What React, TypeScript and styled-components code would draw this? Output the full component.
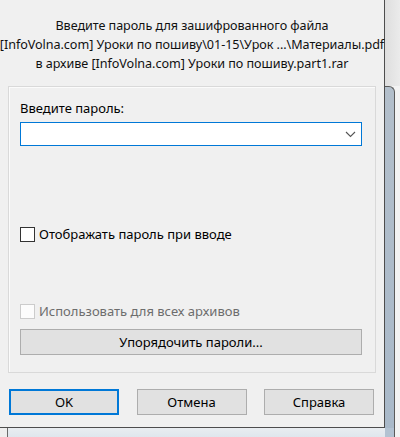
import React from 'react';
import styled, { createGlobalStyle } from 'styled-components';

const GlobalStyle = createGlobalStyle`
  html, body {
    margin: 0;
    padding: 0;
    background: #eef1f4;
  }
  * {
    box-sizing: border-box;
  }
`;

const Desktop = styled.div`
  width: 400px;
  height: 437px;
  display: grid;
  grid-template-columns: 385px 1fr;
  grid-template-rows: 428px 1fr;
  overflow: hidden;
  font-family: 'Noto Sans', 'Liberation Sans', sans-serif;
  font-size: 13px;
  color: #000;
`;

const Dialog = styled.div`
  background: #f0f0f0;
  border-right: 1px solid #4d4d4d;
  border-bottom: 1px solid #4d4d4d;
  display: flex;
  flex-direction: column;
  min-width: 0;
`;

/* window behind the dialog, visible along the right and bottom edges */
const SideStrip = styled.div`
  display: flex;
  flex-direction: column;
`;

const SideTop = styled.div`
  height: 86px;
  background: linear-gradient(90deg, #dedede 0%, #ebebeb 100%);
`;

const SideFrame = styled.div`
  flex: 1;
  display: flex;
  background: #f3f3f3;
`;

const FrameTab = styled.div`
  width: 10px;
  background: linear-gradient(180deg, #b3bfcb 0%, #a9b9c9 100%);
  border-top: 1px solid #5a5a5a;
  border-right: 1px solid #5a5a5a;
  border-top-right-radius: 6px;
`;

const BottomStrip = styled.div`
  grid-column: 1 / span 2;
  display: flex;
`;

const BottomEdge = styled.div`
  width: 8px;
  background: #eeeeee;
  border-right: 1px solid #6a6a6a;
`;

const BottomFill = styled.div`
  width: 377px;
  background: linear-gradient(180deg, #e9edf1 0%, #dfe6ed 100%);
`;

const BottomTab = styled.div`
  width: 10px;
  background: #b2c2d2;
  border-right: 1px solid #5a5a5a;
`;

const BottomRest = styled.div`
  flex: 1;
  background: #f3f3f3;
`;

const Header = styled.div`
  padding-top: 16px;
  display: flex;
  flex-direction: column;
  align-items: center;
  line-height: 19px;
  font-size: 12.6px;
  letter-spacing: -0.05px;
  color: #111;
  white-space: nowrap;
`;

const GroupBox = styled.div`
  margin: 13px 8px 0 8px;
  height: 287px;
  border: 1px solid #d9d9d9;
  box-shadow: inset 1px 1px 0 #fbfbfb;
  padding: 13px 13px 0 11px;
  display: flex;
  flex-direction: column;
`;

const FieldLabel = styled.div`
  line-height: 17px;
`;

const Combo = styled.div`
  margin-top: 5px;
  height: 24px;
  background: #fff;
  border: 1px solid #0078d7;
  display: flex;
  align-items: center;
  justify-content: flex-end;
  padding-right: 5px;
`;

const CheckRow = styled.label<{ $top: number; $disabled?: boolean }>`
  margin-top: ${p => p.$top}px;
  display: flex;
  align-items: center;
  gap: 4px;
  line-height: 17px;
  color: ${p => (p.$disabled ? '#6d6d6d' : '#000')};
`;

const Box = styled.span<{ $disabled?: boolean }>`
  width: 15px;
  height: 15px;
  background: ${p => (p.$disabled ? '#fcfcfc' : '#fff')};
  border: 1px solid ${p => (p.$disabled ? '#cccccc' : '#333333')};
`;

const Button = styled.div<{ $default?: boolean }>`
  height: 26px;
  display: flex;
  align-items: center;
  justify-content: center;
  background: #e1e1e1;
  border: ${p => (p.$default ? '2px solid #0078d7' : '1px solid #adadad')};
  color: #000;
`;

const WideButton = styled(Button)`
  margin-top: 9px;
`;

const Footer = styled.div`
  margin-top: 16px;
  padding: 0 10px 0 9px;
  display: flex;
  justify-content: space-between;
`;

const FooterButton = styled(Button)`
  width: 110px;
`;

const Chevron = () => (
  <svg width="11" height="7" viewBox="0 0 11 7">
    <path d="M1 1l4.5 4.5L10 1" fill="none" stroke="#555" strokeWidth="1.1" />
  </svg>
);

export default function App() {
  return (
    <Desktop>
      <GlobalStyle />
      <Dialog>
        <Header>
          <span>Введите пароль для зашифрованного файла</span>
          <span>[InfoVolna.com] Уроки по пошиву\01-15\Урок ...\Материалы.pdf</span>
          <span>в архиве [InfoVolna.com] Уроки по пошиву.part1.rar</span>
        </Header>
        <GroupBox>
          <FieldLabel>Введите пароль:</FieldLabel>
          <Combo>
            <Chevron />
          </Combo>
          <CheckRow $top={80}>
            <Box />
            Отображать пароль при вводе
          </CheckRow>
          <CheckRow $top={60} $disabled>
            <Box $disabled />
            Использовать для всех архивов
          </CheckRow>
          <WideButton>Упорядочить пароли...</WideButton>
        </GroupBox>
        <Footer>
          <FooterButton $default>OK</FooterButton>
          <FooterButton>Отмена</FooterButton>
          <FooterButton>Справка</FooterButton>
        </Footer>
      </Dialog>
      <SideStrip>
        <SideTop />
        <SideFrame>
          <FrameTab />
        </SideFrame>
      </SideStrip>
      <BottomStrip>
        <BottomEdge />
        <BottomFill />
        <BottomTab />
        <BottomRest />
      </BottomStrip>
    </Desktop>
  );
}
